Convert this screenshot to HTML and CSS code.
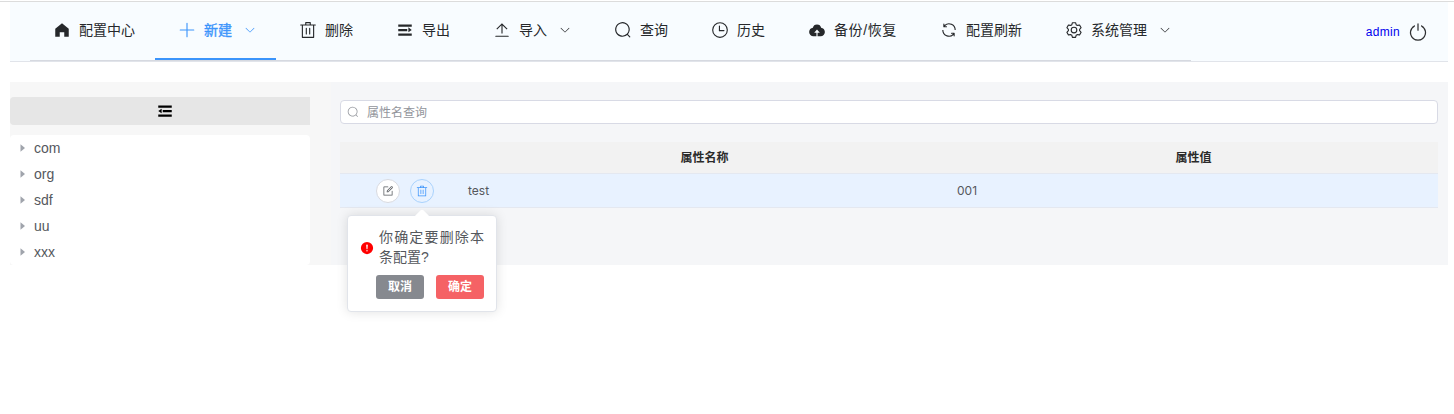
FILE: index.html
```html
<!DOCTYPE html>
<html lang="zh-CN">
<head>
<meta charset="utf-8">
<title>配置中心</title>
<link rel="stylesheet" href="styles.css">
</head>
<body>
<svg class="sprite" aria-hidden="true">
  <symbol id="home" viewBox="0 0 1024 1024"><path d="M512 128 128 447.936V896h255.936V640H640v256h255.936V447.936z"/></symbol>
  <symbol id="plus" viewBox="0 0 1024 1024"><path d="M480 480V128a32 32 0 0 1 64 0v352h352a32 32 0 1 1 0 64H544v352a32 32 0 1 1-64 0V544H128a32 32 0 0 1 0-64z"/></symbol>
  <symbol id="down" viewBox="0 0 1024 1024"><path d="M831.872 340.864 512 652.672 192.128 340.864a30.592 30.592 0 0 0-42.752 0 29.12 29.12 0 0 0 0 41.6L489.664 714.24a32 32 0 0 0 44.672 0l340.288-331.712a29.12 29.12 0 0 0 0-41.728 30.592 30.592 0 0 0-42.752 0z"/></symbol>
  <symbol id="delete" viewBox="0 0 1024 1024"><path d="M160 256H96a32 32 0 0 1 0-64h256V95.936a32 32 0 0 1 32-32h256a32 32 0 0 1 32 32V192h256a32 32 0 1 1 0 64h-64v672a32 32 0 0 1-32 32H192a32 32 0 0 1-32-32zm448-64v-64H416v64zM224 896h576V256H224zm192-128a32 32 0 0 1-32-32V416a32 32 0 0 1 64 0v320a32 32 0 0 1-32 32m192 0a32 32 0 0 1-32-32V416a32 32 0 0 1 64 0v320a32 32 0 0 1-32 32"/></symbol>
  <symbol id="expand" viewBox="0 0 1024 1024"><path d="M128 192h768v128H128zm0 256h512v128H128zm0 256h768v128H128zm576-352 192 160-192 128z"/></symbol>
  <symbol id="fold" viewBox="0 0 1024 1024"><path d="M896 192H128v128h768zm0 256H384v128h512zm0 256H128v128h768zM320 384 128 512l192 128z"/></symbol>
  <symbol id="upload" viewBox="0 0 1024 1024"><path d="M160 832h704a32 32 0 1 1 0 64H160a32 32 0 1 1 0-64m384-578.304V704h-64V247.296L237.248 490.048 192 444.8 508.8 128l316.8 316.8-45.312 45.248z"/></symbol>
  <symbol id="search" viewBox="0 0 1024 1024"><path d="m795.904 750.72 124.992 124.928a32 32 0 0 1-45.248 45.248L750.656 795.904a416 416 0 1 1 45.248-45.248zM480 832a352 352 0 1 0 0-704 352 352 0 0 0 0 704"/></symbol>
  <symbol id="clock" viewBox="0 0 1024 1024"><path d="M512 896a384 384 0 1 0 0-768 384 384 0 0 0 0 768m0 64a448 448 0 1 1 0-896 448 448 0 0 1 0 896"/><path d="M480 256a32 32 0 0 1 32 32v256a32 32 0 0 1-64 0V288a32 32 0 0 1 32-32"/><path d="M480 512h256q32 0 32 32t-32 32H480q-32 0-32-32t32-32"/></symbol>
  <symbol id="cloud" viewBox="0 0 1024 1024"><path d="M544 864V672h128L512 480 352 672h128v192H320v-1.6c-5.376.32-10.496 1.6-16 1.6A240 240 0 0 1 64 624c0-123.136 93.12-223.488 212.608-237.248A239.808 239.808 0 0 1 512 192a239.872 239.872 0 0 1 235.456 194.752c119.488 13.76 212.48 114.112 212.48 237.248a240 240 0 0 1-240 240c-5.376 0-10.56-1.28-16-1.6v1.6z"/></symbol>
  <symbol id="refresh" viewBox="0 0 1024 1024"><path d="M771.776 794.88A384 384 0 0 1 128 512h64a320 320 0 0 0 555.712 216.448H654.72a32 32 0 1 1 0-64h149.056a32 32 0 0 1 32 32v148.928a32 32 0 1 1-64 0v-50.56zM276.288 295.616h92.992a32 32 0 0 1 0 64H220.16a32 32 0 0 1-32-32V178.56a32 32 0 0 1 64 0v50.56A384 384 0 0 1 896.128 512h-64a320 320 0 0 0-555.776-216.384z"/></symbol>
  <symbol id="setting" viewBox="0 0 1024 1024"><path d="M600.704 64a32 32 0 0 1 30.464 22.208l35.2 109.376c14.784 7.232 28.928 15.36 42.432 24.512l112.384-24.192a32 32 0 0 1 34.432 15.36L944.32 364.8a32 32 0 0 1-4.032 37.504l-77.12 85.12a357.12 357.12 0 0 1 0 49.024l77.12 85.248a32 32 0 0 1 4.032 37.504l-88.704 153.6a32 32 0 0 1-34.432 15.296L708.8 803.904c-13.44 9.088-27.648 17.28-42.368 24.512l-35.264 109.376A32 32 0 0 1 600.704 960H423.296a32 32 0 0 1-30.464-22.208L357.696 828.48a351.616 351.616 0 0 1-42.56-24.64l-112.32 24.256a32 32 0 0 1-34.432-15.36L79.68 659.2a32 32 0 0 1 4.032-37.504l77.12-85.248a357.12 357.12 0 0 1 0-48.896l-77.12-85.248A32 32 0 0 1 79.68 364.8l88.704-153.6a32 32 0 0 1 34.432-15.296l112.32 24.256c13.568-9.152 27.776-17.408 42.56-24.64l35.2-109.312A32 32 0 0 1 423.232 64H600.64zm-23.424 64H446.72l-36.352 113.088-24.512 11.968a294.113 294.113 0 0 0-34.816 20.096l-22.656 15.36-116.224-25.088-65.28 113.152 79.68 88.192-1.92 27.136a293.12 293.12 0 0 0 0 40.192l1.92 27.136-79.808 88.192 65.344 113.152 116.224-25.024 22.656 15.296a294.113 294.113 0 0 0 34.816 20.096l24.512 11.968L446.72 896h130.688l36.48-113.152 24.448-11.904a288.282 288.282 0 0 0 34.752-20.096l22.592-15.296 116.288 25.024 65.28-113.152-79.744-88.192 1.92-27.136a293.12 293.12 0 0 0 0-40.256l-1.92-27.136 79.808-88.128-65.344-113.152-116.288 24.96-22.592-15.232a287.616 287.616 0 0 0-34.752-20.096l-24.448-11.904L577.344 128zM512 320a192 192 0 1 1 0 384 192 192 0 0 1 0-384m0 64a128 128 0 1 0 0 256 128 128 0 0 0 0-256"/></symbol>
  <symbol id="power" viewBox="0 0 1024 1024"><path d="M352 159.872V230.4a352 352 0 1 0 320 0v-70.528A416.128 416.128 0 0 1 512 960a416 416 0 0 1-160-800.128"/><path d="M512 64q32 0 32 32v320q0 32-32 32t-32-32V96q0-32 32-32"/></symbol>
  <symbol id="edit" viewBox="0 0 1024 1024"><path d="M832 512a32 32 0 1 1 64 0v352a32 32 0 0 1-32 32H160a32 32 0 0 1-32-32V160a32 32 0 0 1 32-32h352a32 32 0 0 1 0 64H192v640h640z"/><path d="m469.952 554.24 52.8-7.552L847.104 222.4a32 32 0 1 0-45.248-45.248L477.44 501.44l-7.552 52.8zm422.4-422.4a96 96 0 0 1 0 135.808l-331.84 331.84a32 32 0 0 1-18.112 9.088L436.8 623.68a32 32 0 0 1-36.224-36.224l15.104-105.6a32 32 0 0 1 9.024-18.112l331.904-331.84a96 96 0 0 1 135.744 0z"/></symbol>
  <symbol id="caret" viewBox="0 0 1024 1024"><path d="M384 192v640l384-320.064z"/></symbol>
  <symbol id="warning" viewBox="0 0 1024 1024"><path d="M512 64a448 448 0 1 1 0 896 448 448 0 0 1 0-896m0 192a58.432 58.432 0 0 0-58.24 63.744l23.36 256.384a35.072 35.072 0 0 0 69.76 0l23.296-256.384A58.432 58.432 0 0 0 512 256m0 512a51.2 51.2 0 1 0 0-102.4 51.2 51.2 0 0 0 0 102.4"/></symbol>
</svg>

<div class="app">
  <header class="header">
    <nav class="menu">
      <a class="item"><svg class="icon"><use href="#home"/></svg><span>配置中心</span></a>
      <a class="item active"><svg class="icon"><use href="#plus"/></svg><span>新建</span><svg class="arrow"><use href="#down"/></svg></a>
      <a class="item"><svg class="icon"><use href="#delete"/></svg><span>删除</span></a>
      <a class="item"><svg class="icon"><use href="#expand"/></svg><span>导出</span></a>
      <a class="item"><svg class="icon"><use href="#upload"/></svg><span>导入</span><svg class="arrow"><use href="#down"/></svg></a>
      <a class="item"><svg class="icon"><use href="#search"/></svg><span>查询</span></a>
      <a class="item"><svg class="icon"><use href="#clock"/></svg><span>历史</span></a>
      <a class="item"><svg class="icon"><use href="#cloud"/></svg><span class="backup">备份/恢复</span></a>
      <a class="item"><svg class="icon"><use href="#refresh"/></svg><span>配置刷新</span></a>
      <a class="item"><svg class="icon"><use href="#setting"/></svg><span>系统管理</span><svg class="arrow"><use href="#down"/></svg></a>
    </nav>
    <div class="user"><a class="name">admin</a><svg class="power"><use href="#power"/></svg></div>
  </header>

  <div class="body">
    <aside class="aside">
      <div class="fold-bar"><svg class="fold"><use href="#fold"/></svg></div>
      <ul class="tree">
        <li><svg><use href="#caret"/></svg>com</li>
        <li><svg><use href="#caret"/></svg>org</li>
        <li><svg><use href="#caret"/></svg>sdf</li>
        <li><svg><use href="#caret"/></svg>uu</li>
        <li><svg><use href="#caret"/></svg>xxx</li>
      </ul>
    </aside>
    <main class="main">
      <div class="search"><svg><use href="#search"/></svg><span>属性名查询</span></div>
      <div class="table">
        <div class="row head"><div></div><div>属性名称</div><div>属性值</div></div>
        <div class="row current">
          <div class="ops">
            <span class="round"><svg><use href="#edit"/></svg></span>
            <span class="round primary"><svg><use href="#delete"/></svg>
              <div class="popover">
                <div class="message"><svg><use href="#warning"/></svg><p>你确定要删除本条配置?</p></div>
                <div class="actions"><span class="btn cancel">取消</span><span class="btn confirm">确定</span></div>
              </div>
            </span>
          </div>
          <div class="cell">test</div>
          <div class="cell">001</div>
        </div>
      </div>
    </main>
  </div>
</div>
</body>
</html>
```
FILE: styles.css
```css
* { box-sizing: border-box; }
body {
  margin: 0;
  min-height: 100vh;
  padding-top: 1px;
  background: #fff;
  color: #55585d;
  font-family: "Liberation Sans", "Noto Sans CJK SC", sans-serif;
  font-size: 14px;
}
svg { fill: currentColor; flex: none; display: block; }
.sprite { position: absolute; width: 0; height: 0; }
.app { min-height: calc(100vh - 1px); border-top: 1px solid #dcdcdc; padding: 0 6px 0 10px; }

.header {
  display: flex;
  justify-content: space-between;
  height: 60px;
  padding-left: 20px;
  background: #f8fcff;
  border-bottom: 1px solid #e1e4ea;
}
.menu { display: flex; height: 59px; border-bottom: 1px solid #d6d9e0; }
.item {
  display: flex;
  align-items: center;
  height: 58px;
  padding: 0 20px;
  border-bottom: 2px solid transparent;
  color: #26282b;
  white-space: nowrap;
}
.item span { padding-bottom: 2px; }
.item.active { color: #3b94fb; border-bottom-color: #3b94fb; }
.item.active span { -webkit-text-stroke: 0.35px currentColor; }
.icon { width: 18px; height: 18px; margin: 0 8px 0 3px; }
.arrow { width: 12px; height: 12px; margin-left: 12px; }
.backup { width: 63px; letter-spacing: 0.6px; }
.user { display: flex; align-items: center; padding: 1px 20px 0 0; color: #303133; }
.name { color: #00e; font-size: 12px; letter-spacing: 0.3px; margin-right: 8px; }
.power { width: 20px; height: 20px; }

.body { display: flex; height: 183px; margin-top: 20px; }
.aside { width: 321px; padding: 15px 21px 0 0; background: #f7f7f7; }
.fold-bar {
  display: flex;
  align-items: center;
  justify-content: center;
  height: 28px;
  padding-left: 10px;
  background: #e6e6e6;
  border-radius: 4px 0 0 4px;
  color: #000;
}
.fold { width: 18px; height: 18px; }
.tree {
  height: 130px;
  margin: 10px 0 0;
  padding: 0;
  list-style: none;
  background: #fff;
  border-radius: 4px;
}
.tree li { display: flex; align-items: center; height: 26px; padding: 0 0 1px 6px; }
.tree svg { width: 12px; height: 12px; margin: 0 6px 0 0; color: #a0a4ac; }

.main { flex: 1; padding: 18px 10px 0 9px; background: #f5f6f8; font-size: 12px; }
.search {
  display: flex;
  align-items: center;
  height: 24px;
  padding-left: 6px;
  background: #fff;
  border: 1px solid #d8dae5;
  border-radius: 4px;
  color: #92959b;
}
.search svg { width: 12px; height: 12px; margin-right: 8px; }
.search span { padding-bottom: 2px; }

.table { margin-top: 18px; }
.row { display: grid; grid-template-columns: 120px 1fr 1fr; align-items: center; border-bottom: 1px solid #e4e8f0; }
.head { height: 32px; padding-bottom: 2px; background: #f2f2f2; color: #2b2b2b; font-weight: 700; text-align: center; }
.current { height: 34px; background: #e8f2ff; }
.cell { padding-left: 8px; font-family: Inter, sans-serif; }
.ops { display: flex; gap: 10px; padding-left: 36px; }
.round {
  position: relative;
  display: flex;
  align-items: center;
  justify-content: center;
  width: 24px;
  height: 24px;
  border: 1px solid #d8dae0;
  border-radius: 50%;
  background: #fff;
}
.round > svg { width: 12px; height: 12px; }
.primary { background: #e8f2ff; border-color: #a9d2fd; color: #3b94fb; }

.popover {
  position: absolute;
  top: 35px;
  left: -64px;
  width: 150px;
  height: 97px;
  padding: 11px 12px;
  background: #fff;
  border: 1px solid #e1e4ea;
  border-radius: 4px;
  box-shadow: 0 0 12px rgba(0, 0, 0, 0.12);
  color: #55585d;
}
.popover::before {
  content: "";
  position: absolute;
  top: -5px;
  left: 69px;
  width: 10px;
  height: 10px;
  background: #fff;
  border-radius: 2px 0 0;
  transform: rotate(45deg);
}
.message { display: flex; align-items: center; }
.message svg { width: 14px; height: 14px; margin: 2px 5px 0 0; color: #f00; }
.message p { flex: 1; margin: 0; font-size: 14px; line-height: 20px; text-align: justify; }
.actions { display: flex; justify-content: flex-end; gap: 12px; margin-top: 8px; }
.btn { width: 48px; height: 24px; border-radius: 3px; color: #fff; font-weight: 700; font-size: 12px; line-height: 24px; text-align: center; }
.cancel { background: #86898f; }
.confirm { background: #f56265; }
```
